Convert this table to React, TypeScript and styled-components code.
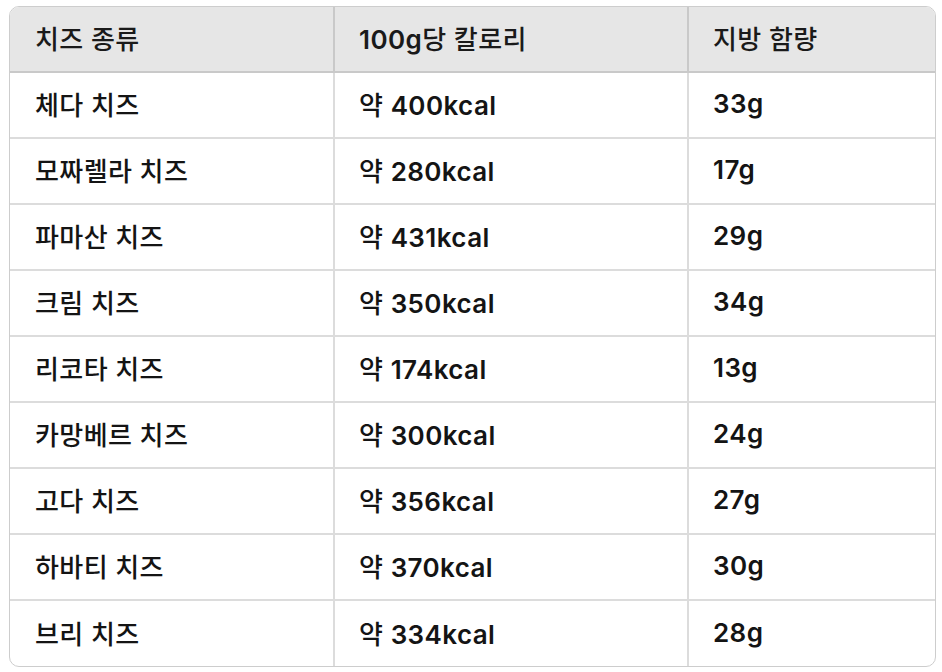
import React from 'react'
import styled, { createGlobalStyle } from 'styled-components'

const GlobalStyle = createGlobalStyle`
  body {
    margin: 0;
    background: #ffffff;
    font-family: Inter, "Noto Sans CJK KR", sans-serif;
  }
`

const Page = styled.div`
  padding: 6px 8px 0 9px;
`

const Wrapper = styled.div`
  width: 925px;
  border: 1px solid #cdcdcd;
  border-radius: 10px;
  overflow: hidden;
`

const Table = styled.table`
  width: 100%;
  border-collapse: collapse;
  table-layout: fixed;
`

const HeadCell = styled.th<{ $w?: number }>`
  box-sizing: border-box;
  width: ${({ $w }) => ($w ? `${$w}px` : 'auto')};
  height: 65px;
  padding: 0 0 3px 24px;
  background: #e6e6e6;
  color: #1a1a1a;
  font-size: 26px;
  font-weight: 500;
  letter-spacing: 0.4px;
  text-align: left;
  border-bottom: 2px solid #c9c9c9;
  border-left: 2px solid #c9c9c9;
  &:first-child {
    border-left: none;
    padding-left: 25px;
  }
`

const Row = styled.tr`
  & + & td {
    border-top: 2px solid #dcdcdc;
  }
`

const Cell = styled.td`
  box-sizing: border-box;
  height: 66px;
  padding: 0 0 3px 24px;
  color: #141414;
  font-size: 26px;
  font-weight: 500;
  letter-spacing: 0.4px;
  border-left: 2px solid #dcdcdc;
  &:first-child {
    border-left: none;
    padding-left: 25px;
  }
`

// latin figures read heavier than the hangul in the shot
const Num = styled.span`
  font-weight: 600;
`

const cheeses = [
  ['체다 치즈', '400kcal', '33g'],
  ['모짜렐라 치즈', '280kcal', '17g'],
  ['파마산 치즈', '431kcal', '29g'],
  ['크림 치즈', '350kcal', '34g'],
  ['리코타 치즈', '174kcal', '13g'],
  ['카망베르 치즈', '300kcal', '24g'],
  ['고다 치즈', '356kcal', '27g'],
  ['하바티 치즈', '370kcal', '30g'],
  ['브리 치즈', '334kcal', '28g'],
]

const App = () => (
  <Page>
    <GlobalStyle />
    <Wrapper>
      <Table>
        <thead>
          <tr>
            <HeadCell $w={324}>치즈 종류</HeadCell>
            <HeadCell $w={354}>
              <Num>100g</Num>당 칼로리
            </HeadCell>
            <HeadCell>지방 함량</HeadCell>
          </tr>
        </thead>
        <tbody>
          {cheeses.map(([name, kcal, fat]) => (
            <Row key={name}>
              <Cell>{name}</Cell>
              <Cell>
                약 <Num>{kcal}</Num>
              </Cell>
              <Cell>
                <Num>{fat}</Num>
              </Cell>
            </Row>
          ))}
        </tbody>
      </Table>
    </Wrapper>
  </Page>
)

export default App
